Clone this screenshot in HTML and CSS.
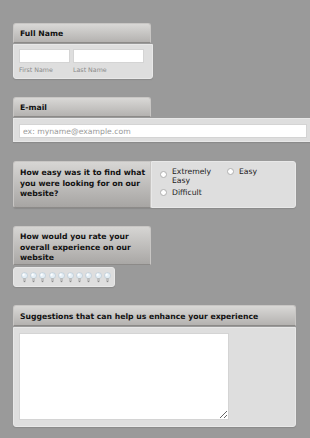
FILE: index.html
```html
<!DOCTYPE html>
<html>
	<head>
		<meta charset="UTF-8">
		<title>Survey</title>
		<link rel="stylesheet" href="styles.css">
	</head>
	<body>
		<form class="survey">
			<div class="field">
				<div class="label">Full Name</div>
				<div class="box name-box">
					<div class="sub">
						<input type="text" class="first">
						<span>First Name</span>
					</div>
					<div class="sub">
						<input type="text" class="last">
						<span>Last Name</span>
					</div>
				</div>
			</div>

			<div class="field">
				<div class="label">E-mail</div>
				<div class="box email-box">
					<input type="text" class="email" placeholder="ex: myname@example.com">
				</div>
			</div>

			<div class="field row">
				<div class="label tall">How easy was it to find what you were looking for on our website?</div>
				<div class="box radios">
					<label class="opt"><span class="dot"></span><span>Extremely<br>Easy</span></label>
					<label class="opt"><span class="dot"></span><span>Easy</span></label>
					<label class="opt"><span class="dot"></span><span>Difficult</span></label>
				</div>
			</div>

			<div class="field">
				<div class="label tall">How would you rate your overall experience on our website</div>
				<div class="box bulbs" id="bulbs"></div>
			</div>

			<div class="field wide">
				<div class="label">Suggestions that can help us enhance your experience</div>
				<div class="box text-box">
					<textarea></textarea>
				</div>
			</div>
		</form>
		<script>
			// ten rating bulbs
			var bulbs = document.getElementById('bulbs');
			var svg = '<svg width="7" height="11" viewBox="0 0 7 11">' +
				'<circle cx="3.5" cy="3.6" r="3" fill="#e4eef5" stroke="#a8bccb" stroke-width="0.5"/>' +
				'<circle cx="2.6" cy="2.7" r="1.1" fill="#ffffff"/>' +
				'<rect x="2.2" y="6.4" width="2.6" height="2.8" fill="#a4a4a4"/>' +
				'<line x1="2.2" y1="7.3" x2="4.8" y2="7.3" stroke="#e2e2e2" stroke-width="0.5"/>' +
				'<line x1="2.2" y1="8.3" x2="4.8" y2="8.3" stroke="#e2e2e2" stroke-width="0.5"/>' +
				'<rect x="2.8" y="9.2" width="1.4" height="0.9" fill="#7a7a7a"/>' +
				'</svg>';
			for(var i = 0; i < 10; i++) {
				var s = document.createElement('span');
				s.className = 'bulb';
				s.innerHTML = svg;
				bulbs.appendChild(s);
			}
		</script>
	</body>
</html>
```

FILE: styles.css
```css
* {
	margin: 0;
	padding: 0;
	box-sizing: border-box;
}

html, body {
	overflow: hidden;
}

body {
	background: #9a9a9a;
	font-family: "DejaVu Sans", Verdana, sans-serif;
	color: #111;
	width: 310px;
	height: 438px;
}

.survey {
	padding: 23px 0 0 13px;
	display: flex;
	flex-direction: column;
	gap: 18px;
}

.field {
	display: flex;
	flex-direction: column;
	gap: 1px;
	align-items: flex-start;
}

.label {
	width: 138px;
	height: 20px;
	padding: 0 6px;
	font-size: 7.7px;
	font-weight: bold;
	line-height: 20px;
	background: linear-gradient(#d9d8d6, #b4b2b0);
	border: 1px solid #c8c6c4;
	border-bottom-color: #8c8a88;
	border-radius: 3px 3px 0 0;
}

.label.tall {
	height: 39px;
	padding: 5px 2px 0 6px;
	line-height: 10.5px;
	background: linear-gradient(#d6d5d3, #a9a7a5);
}

.box {
	background: #dedede;
	border: 1px solid #e8e8e8;
	border-radius: 0 0 3px 3px;
	box-shadow: 0 1px 1px #8a8a8a;
}

input, textarea {
	display: block;
	background: #fff;
	border: 1px solid #d4d4d4;
	font-family: "DejaVu Sans", Verdana, sans-serif;
	font-size: 7.7px;
	outline: none;
}

input::placeholder {
	color: #999;
}

.name-box {
	width: 140px;
	height: 35px;
	padding: 4px 5px;
	display: flex;
	gap: 3px;
}

.sub span {
	display: block;
	margin-top: 3px;
	font-size: 6.3px;
	color: #8a8a8a;
}

.first {
	width: 51px;
	height: 14px;
}

.last {
	width: 71px;
	height: 14px;
}

.email-box {
	width: 310px;
	height: 24px;
	padding: 5px 5px;
	border-radius: 0;
}

.email {
	width: 288px;
	height: 14px;
	padding: 0 3px;
}

.row {
	flex-direction: row;
	gap: 0;
	width: 283px;
	height: 47px;
	margin-top: 1px;
	border-radius: 3px;
	box-shadow: 0 1px 1px #8a8a8a;
}

.row .label {
	height: 47px;
	border-radius: 3px 0 0 3px;
	border-bottom-color: #8c8a88;
	padding-top: 6px;
	background: linear-gradient(#d7d6d4, #a7a5a3);
}

.radios {
	flex: 1;
	height: 47px;
	border-radius: 0 3px 3px 0;
	box-shadow: none;
	padding: 5px 0 0 8px;
	display: flex;
	flex-wrap: wrap;
	column-gap: 12px;
	row-gap: 2px;
	align-content: flex-start;
	font-size: 7.7px;
	line-height: 9px;
	color: #222;
}

.opt {
	display: flex;
	align-items: flex-start;
	gap: 5px;
}

.opt:first-child {
	width: 55px;
}

.dot {
	width: 7px;
	height: 7px;
	margin-top: 4px;
	border-radius: 50%;
	background: #fff;
	border: 1px solid #b0b0b0;
	flex-shrink: 0;
}

.opt:nth-child(2) .dot {
	margin-top: 1px;
}

.opt:nth-child(3) .dot {
	margin-top: 2px;
}

.opt:nth-child(3) span:last-child {
	margin-top: 1px;
}

.bulbs {
	width: 102px;
	height: 20px;
	padding: 4px 0 0 7px;
	display: flex;
	gap: 2.2px;
	border-radius: 3px;
	margin-top: 1px;
}

.bulb svg {
	display: block;
}

.wide .label {
	width: 283px;
	height: 21px;
	line-height: 21px;
}

.text-box {
	width: 283px;
	height: 100px;
	padding: 5px 5px;
}

textarea {
	width: 210px;
	height: 87px;
	resize: both;
}
```
